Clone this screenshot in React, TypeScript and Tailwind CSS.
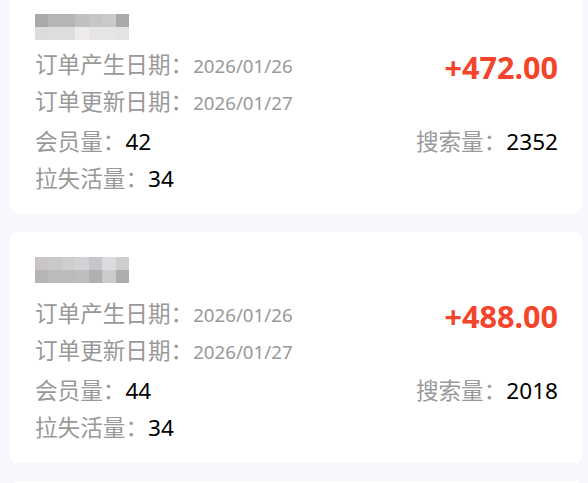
const font = { fontFamily: '"Noto Sans", "Noto Sans CJK SC", sans-serif' }

interface Order {
  mosaicPad: string
  mosaic: string[][]
  created: string
  updated: string
  amount: string
  members: number
  searches: number
  lost: number
}

const orders: Order[] = [
  {
    mosaicPad: 'pt-[9px]',
    mosaic: [
      ['#a9a9a9', '#b5b5b5', '#b5b5b5', '#c0c0c0', '#c8c5c8', '#c9c9c9', '#a9a9a9'],
      ['#dcdcdc', '#dedede', '#dedede', '#eeeaee', '#e5e5e5', '#e5e5e5', '#e4e2e4'],
    ],
    created: '2026/01/26',
    updated: '2026/01/27',
    amount: '+472.00',
    members: 42,
    searches: 2352,
    lost: 34,
  },
  {
    mosaicPad: 'pt-[3px]',
    mosaic: [
      ['#c8c4c8', '#c9c9cb', '#d0cdd0', '#d3d3d5', '#c8c5ca', '#dcdadd', '#cecece'],
      ['#b5b5b5', '#bbbbbb', '#bbbbbb', '#bfbdbf', '#b1afb1', '#cbcbcb', '#adadad'],
    ],
    created: '2026/01/26',
    updated: '2026/01/27',
    amount: '+488.00',
    members: 44,
    searches: 2018,
    lost: 34,
  },
]

function Mosaic({ rows }: { rows: string[][] }) {
  return (
    <div className="flex flex-col w-[94px]">
      {rows.map((row, i) => (
        <div key={i} className="flex h-[13px]">
          {row.map((c, j) => (
            <div key={j} className="flex-1 h-full" style={{ backgroundColor: c }} />
          ))}
        </div>
      ))}
    </div>
  )
}

function Stat({ label, value }: { label: string; value: number }) {
  return (
    <div className="flex items-baseline">
      <span className="text-[#999999]">{label}：</span>
      <span className="text-black">{value}</span>
    </div>
  )
}

function OrderCard({ order }: { order: Order }) {
  return (
    <div className="bg-white rounded-[7px] pl-[25px] pr-[24px] pt-[22px] pb-[17px] h-[231px] text-[22.6px]">
      <div className={`h-[38px] ${order.mosaicPad}`}>
        <Mosaic rows={order.mosaic} />
      </div>

      <div className="mt-[3px] flex justify-between">
        <div className="flex flex-col">
          <div className="flex items-baseline h-[37px] leading-[37px]">
            <span className="text-[#999999]">订单产生日期：</span>
            <span className="text-[#999999] text-[18.7px]">{order.created}</span>
          </div>
          <div className="flex items-baseline h-[37px] leading-[37px]">
            <span className="text-[#999999]">订单更新日期：</span>
            <span className="text-[#999999] text-[18.7px]">{order.updated}</span>
          </div>
        </div>
        <div className="pt-[3px]">
          <span className="text-[30.6px] font-bold leading-[36px] text-[#f4442b]">{order.amount}</span>
        </div>
      </div>

      <div className="mt-[3px] flex justify-between h-[37px] leading-[37px]">
        <Stat label="会员量" value={order.members} />
        <Stat label="搜索量" value={order.searches} />
      </div>
      <div className="flex h-[37px] leading-[37px]">
        <Stat label="拉失活量" value={order.lost} />
      </div>
    </div>
  )
}

export default function App() {
  return (
    <div className="w-[588px] h-[483px] overflow-hidden bg-[#f7f8fd]" style={font}>
      <div className="flex flex-col gap-[18px] pl-[10px] pr-[6px] -mt-[17px]">
        {orders.map((o, i) => (
          <OrderCard key={i} order={o} />
        ))}
        {/* next card, only its top edge is in view */}
        <div className="bg-white rounded-[7px] h-[231px]" />
      </div>
    </div>
  )
}
